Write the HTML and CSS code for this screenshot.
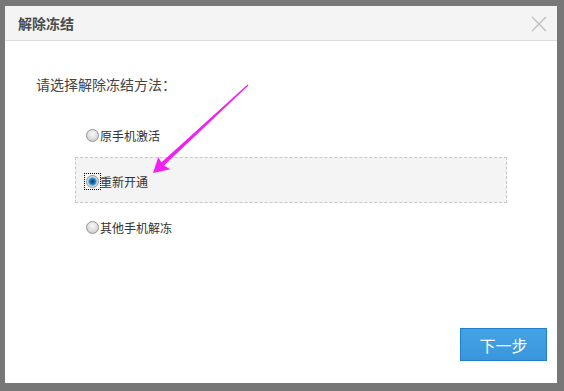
FILE: index.html
```html
<!DOCTYPE html>
<html>
<head>
<meta charset="utf-8">
<link rel="stylesheet" href="styles.css">
</head>
<body>
<div class="dialog">
  <div class="header">
    <span class="title">解除冻结</span>
    <svg class="close" width="16" height="16" viewBox="0 0 16 16"><path d="M1 1L15 15M15 1L1 15" stroke="#bdbdbd" stroke-width="1.3" fill="none"/></svg>
  </div>
  <div class="content">
    <div class="prompt">请选择解除冻结方法：</div>
    <div class="options">
      <label class="option"><span class="radio"></span><span class="label">原手机激活</span></label>
      <label class="option selected"><span class="focus"><span class="radio checked"></span></span><span class="label">重新开通</span></label>
      <label class="option"><span class="radio"></span><span class="label">其他手机解冻</span></label>
    </div>
  </div>
  <div class="footer">
    <button class="next">下一步</button>
  </div>
  <svg class="arrow" width="552" height="377" viewBox="5 6 552 377">
    <polygon points="153,173 158.3,157 161.3,162.5 247.6,84.4 248.4,85.4 164,165.6 170.3,169.2" fill="#f21ff0"/>
  </svg>
</div>
</body>
</html>
```
FILE: styles.css
```css
html, body {
  margin: 0;
  padding: 0;
  background: #777777;
  font-family: "Noto Sans CJK SC", "Microsoft YaHei", sans-serif;
}
body {
  padding: 6px 7px 8px 5px;
  width: 564px;
  height: 391px;
  box-sizing: border-box;
}
.dialog {
  position: relative;
  width: 552px;
  height: 377px;
  background: #fff;
  display: flex;
  flex-direction: column;
}
.header {
  height: 34px;
  background: #f4f4f4;
  border-bottom: 1px solid #dcdcdc;
  display: flex;
  align-items: center;
  justify-content: space-between;
  padding: 0 10px 0 13px;
}
.title {
  font-size: 14px;
  font-weight: bold;
  color: #4a4a4a;
  line-height: 20px;
}
.close {
  display: block;
  margin-top: 1px;
}
.content {
  padding: 33px 0 0 31px;
}
.prompt {
  font-size: 14px;
  line-height: 20px;
  color: #444;
}
.options {
  margin: 17px 0 0 39px;
  width: 432px;
}
.option {
  height: 46px;
  box-sizing: border-box;
  border: 1px solid transparent;
  padding: 3px 0 0 9px;
  display: flex;
  align-items: center;
  font-size: 12px;
  color: #333;
}
.option.selected {
  background: #f4f4f4;
  border: 1px dashed #c8c8c8;
}
.radio {
  width: 11px;
  height: 11px;
  border-radius: 50%;
  border: 1px solid #959595;
  background: radial-gradient(circle at 50% 35%, #fafafa 0%, #e0e0e0 50%, #bdbdbd 100%);
  box-sizing: content-box;
  margin: 0 1px 0 1px;
  flex: none;
}
.focus {
  display: flex;
  outline: 1px dotted #000;
  padding: 1px 0;
  margin-right: 0;
}
.radio.checked {
  margin: 0 1px;
  background: radial-gradient(circle at 50% 50%, #0a3d66 0%, #1a73b8 30%, #3f9ad8 45%, #d8d8d8 60%, #f2f2f2 100%);
}
.label {
  line-height: 16px;
}
.footer {
  margin-top: auto;
  display: flex;
  justify-content: flex-end;
  padding: 0 10px 22px 0;
}
.next {
  width: 87px;
  height: 33px;
  border: 1px solid #1f7fce;
  background: linear-gradient(#43a2e6, #3a96dc);
  color: #fff;
  font-family: "Noto Sans CJK SC", sans-serif;
  font-size: 16px;
  padding: 0;
  letter-spacing: 0;
}
.arrow {
  position: absolute;
  left: 0;
  top: 0;
  pointer-events: none;
}
```
